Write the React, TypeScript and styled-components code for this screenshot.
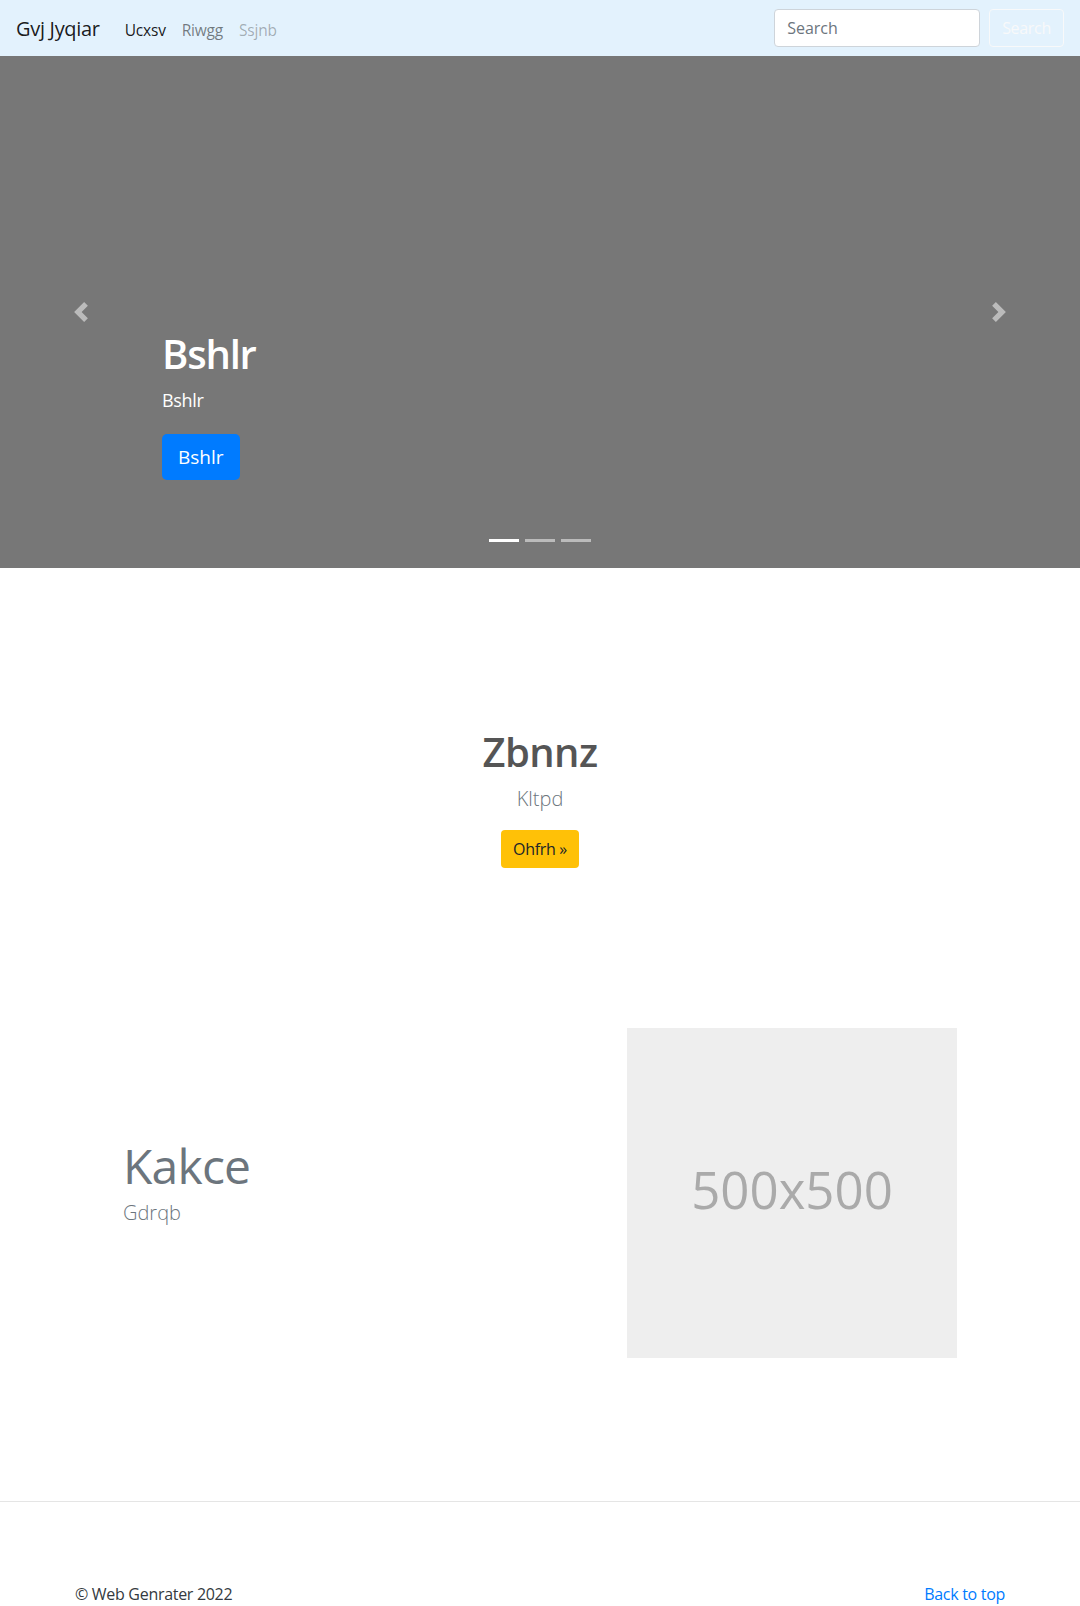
import React from "react";
import styled, { createGlobalStyle } from "styled-components";

const GlobalStyle = createGlobalStyle`
  *, *::before, *::after { box-sizing: border-box; }
  html, body { margin: 0; padding: 0; }
  body {
    font-family: "Open Sans", "Noto Sans", sans-serif;
    font-size: 16px;
    line-height: 1.5;
    color: #212529;
    background: #fff;
  }
`;

const Navbar = styled.nav`
  height: 56px;
  display: flex;
  align-items: center;
  justify-content: space-between;
  padding: 8px 16px;
  background: #e3f2fd;
`;

const Left = styled.div`
  display: flex;
  align-items: center;
`;

const Brand = styled.a`
  font-size: 20px;
  line-height: 30px;
  padding: 6px 0 4px;
  margin-right: 17px;
  letter-spacing: -0.3px;
  color: rgba(0, 0, 0, 0.9);
  text-decoration: none;
`;

const NavList = styled.ul`
  display: flex;
  list-style: none;
  margin: 0;
  padding: 0;
`;

const NavLink = styled.a<{ $tone: number }>`
  display: block;
  padding: 10px 8px 6px;
  font-size: 15.5px;
  line-height: 24px;
  letter-spacing: -0.2px;
  color: rgba(0, 0, 0, ${(p) => p.$tone});
  text-decoration: none;
`;

const SearchForm = styled.form`
  display: flex;
  align-items: center;
`;

const SearchInput = styled.input`
  width: 206px;
  height: 38px;
  padding: 6px 12px;
  margin-right: 9px;
  font-family: inherit;
  font-size: 16px;
  color: #495057;
  border: 1px solid #ced4da;
  border-radius: 4px;
  background: #fff;
  &::placeholder { color: #6c757d; }
`;

const OutlineButton = styled.button`
  height: 38px;
  padding: 6px 12px;
  font-family: inherit;
  font-size: 16px;
  line-height: 24px;
  letter-spacing: -0.3px;
  color: #f8f9fa;
  background: transparent;
  border: 1px solid #f8f9fa;
  border-radius: 4px;
`;

const Carousel = styled.section`
  position: relative;
  height: 512px;
  background: #777;
  display: grid;
  grid-template-columns: 15% 1fr 15%;
`;

const Control = styled.div`
  display: flex;
  align-items: center;
  justify-content: center;
  opacity: 0.5;
`;

const Caption = styled.div`
  align-self: end;
  padding-bottom: 88px;
  color: #fff;
`;

const CaptionTitle = styled.h1`
  margin: 0 0 8px;
  font-size: 40px;
  line-height: 1.25;
  font-weight: 600;
  letter-spacing: -1.2px;
`;

const CaptionText = styled.p`
  margin: 0 0 20px;
  font-size: 18px;
  letter-spacing: -0.3px;
`;

const PrimaryButton = styled.a`
  display: inline-block;
  padding: 8px 16px;
  font-size: 19px;
  line-height: 30px;
  color: #fff;
  background: #007bff;
  border-radius: 5px;
  text-decoration: none;
`;

const Indicators = styled.ol`
  position: absolute;
  left: 0;
  right: 0;
  bottom: 16px;
  display: flex;
  justify-content: center;
  list-style: none;
  margin: 0;
  padding: 0;
`;

const Indicator = styled.li<{ $active?: boolean }>`
  width: 30px;
  height: 3px;
  margin: 10px 3px;
  background: #fff;
  opacity: ${(p) => (p.$active ? 1 : 0.5)};
`;

const Intro = styled.section`
  padding: 160px 0;
  text-align: center;
`;

const IntroTitle = styled.h1`
  margin: 0 0 8px;
  font-size: 40px;
  line-height: 1.2;
  font-weight: 600;
  letter-spacing: -0.6px;
  color: #555;
`;

const Lead = styled.p`
  margin: 0 0 16px;
  font-size: 20px;
  font-weight: 300;
  color: #6c757d;
`;

const WarningButton = styled.a`
  display: inline-block;
  padding: 6px 12px;
  font-size: 16px;
  line-height: 26px;
  letter-spacing: -0.3px;
  color: #212529;
  background: #ffc107;
  border-radius: 4px;
  text-decoration: none;
`;

const Featurette = styled.section`
  width: 80%;
  margin: 0 auto;
  padding-bottom: 63px;
  display: grid;
  grid-template-columns: 7fr 5fr;
  align-items: center;
`;

const FeatureText = styled.div`
  padding: 0 15px;
`;

const FeatureHeading = styled.h2`
  margin: 0 0 8px;
  font-size: 48px;
  line-height: 1;
  font-weight: 400;
  letter-spacing: -0.8px;
  color: #6c757d;
`;

const FeatureImageCol = styled.div`
  padding: 0 15px;
`;

const Placeholder = styled.div`
  width: 330px;
  height: 330px;
  padding-bottom: 8px;
  background: #eee;
  color: #aaa;
  display: flex;
  align-items: center;
  justify-content: center;
  font-size: 51px;
  line-height: 1;
`;

const Divider = styled.hr`
  margin: 80px 0 80px;
  border: 0;
  border-top: 1px solid rgba(0, 0, 0, 0.1);
`;

const Footer = styled.footer`
  width: 960px;
  margin: 0 auto;
  padding: 0 15px;
  display: flex;
  justify-content: space-between;
  letter-spacing: -0.3px;
`;

const FooterText = styled.p`
  margin: 0 0 16px;
  color: #343a40;
`;

const TopLink = styled.a`
  color: #007bff;
  text-decoration: none;
`;

const ChevronLeft = () => (
  <svg width="20" height="20" viewBox="0 0 8 8" fill="#fff">
    <path d="M5.25 0l-4 4 4 4 1.5-1.5L4.25 4l2.5-2.5L5.25 0z" />
  </svg>
);

const ChevronRight = () => (
  <svg width="20" height="20" viewBox="0 0 8 8" fill="#fff">
    <path d="M2.75 0l-1.5 1.5L3.75 4l-2.5 2.5L2.75 8l4-4-4-4z" />
  </svg>
);

export default function App() {
  return (
    <>
      <GlobalStyle />
      <Navbar>
        <Left>
          <Brand href="#">Gvj Jyqiar</Brand>
          <NavList>
            <li><NavLink $tone={0.9} href="#">Ucxsv</NavLink></li>
            <li><NavLink $tone={0.5} href="#">Riwgg</NavLink></li>
            <li><NavLink $tone={0.3} href="#">Ssjnb</NavLink></li>
          </NavList>
        </Left>
        <SearchForm onSubmit={(e) => e.preventDefault()}>
          <SearchInput type="text" placeholder="Search" />
          <OutlineButton type="submit">Search</OutlineButton>
        </SearchForm>
      </Navbar>

      <Carousel>
        <Control><ChevronLeft /></Control>
        <Caption>
          <CaptionTitle>Bshlr</CaptionTitle>
          <CaptionText>Bshlr</CaptionText>
          <PrimaryButton href="#">Bshlr</PrimaryButton>
        </Caption>
        <Control><ChevronRight /></Control>
        <Indicators>
          <Indicator $active />
          <Indicator />
          <Indicator />
        </Indicators>
      </Carousel>

      <Intro>
        <IntroTitle>Zbnnz</IntroTitle>
        <Lead>Kltpd</Lead>
        <WarningButton href="#">Ohfrh »</WarningButton>
      </Intro>

      <Featurette>
        <FeatureText>
          <FeatureHeading>Kakce</FeatureHeading>
          <Lead>Gdrqb</Lead>
        </FeatureText>
        <FeatureImageCol>
          <Placeholder>500x500</Placeholder>
        </FeatureImageCol>
      </Featurette>

      <Divider />

      <Footer>
        <FooterText>© Web Genrater 2022</FooterText>
        <FooterText><TopLink href="#">Back to top</TopLink></FooterText>
      </Footer>
    </>
  );
}
